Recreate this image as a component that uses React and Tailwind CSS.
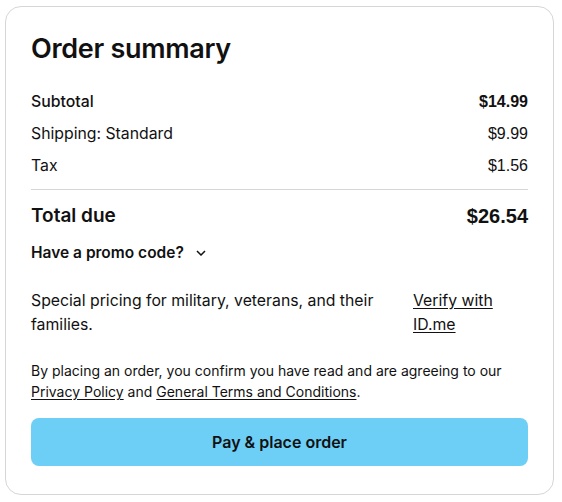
import React from 'react';

const rows = [
  { label: 'Subtotal', value: '$14.99', bold: true },
  { label: 'Shipping: Standard', value: '$9.99' },
  { label: 'Tax', value: '$1.56' },
];

const App = () => {
  return (
    <div className="bg-white w-[562px] h-[502px] pt-[6px] pl-[5px]" style={{ fontFamily: 'Inter, "Noto Sans", sans-serif' }}>
      <div className="w-[549px] h-[489px] border border-[#d6d6d6] rounded-2xl px-[25px] pt-[25px] text-[#111]">
        {/* Title */}
        <h1 className="text-[27px] leading-[34px] font-semibold tracking-[-0.3px]">Order summary</h1>

        {/* Line items */}
        <div className="mt-[20px]">
          {rows.map((row) => (
            <div key={row.label} className="flex justify-between items-center h-8 text-[15.8px]">
              <span className={row.bold ? 'font-medium' : ''}>{row.label}</span>
              <span className={row.bold ? 'font-bold' : ''} style={{ fontFamily: '"Liberation Sans", Arial, sans-serif', fontSize: 16 }}>
                {row.value}
              </span>
            </div>
          ))}
        </div>

        <div className="border-t border-[#d6d6d6] mt-[7px]" />

        {/* Total */}
        <div className="flex justify-between items-center h-[36px] mt-[8px]">
          <span className="text-[19px] font-semibold">Total due</span>
          <span className="text-[20px] font-bold" style={{ fontFamily: '"Liberation Sans", Arial, sans-serif' }}>$26.54</span>
        </div>

        {/* Promo */}
        <button className="flex items-center gap-3 mt-[4px] h-[30px] text-[15.5px] font-semibold">
          Have a promo code?
          <svg width="10" height="6" viewBox="0 0 10 6" fill="none" stroke="#111" strokeWidth="1.5">
            <path d="M1 1l4 4 4-4" />
          </svg>
        </button>

        {/* Military */}
        <div className="flex justify-between mt-[21px] text-[15.8px] leading-6">
          <p className="w-[370px]">Special pricing for military, veterans, and their families.</p>
          <a href="#" className="underline underline-offset-2 w-[115px]">Verify with ID.me</a>
        </div>

        {/* Legal */}
        <p className="mt-[23px] text-[14px] leading-[21px]">
          By placing an order, you confirm you have read and are agreeing to our{' '}
          <a href="#" className="underline underline-offset-2">Privacy Policy</a> and{' '}
          <a href="#" className="underline underline-offset-2">General Terms and Conditions</a>.
        </p>

        <button className="mt-[16px] w-full h-12 rounded-lg bg-[#6dcff6] text-[16px] font-semibold text-[#111]">
          Pay &amp; place order
        </button>
      </div>
    </div>
  );
};

export default App;
